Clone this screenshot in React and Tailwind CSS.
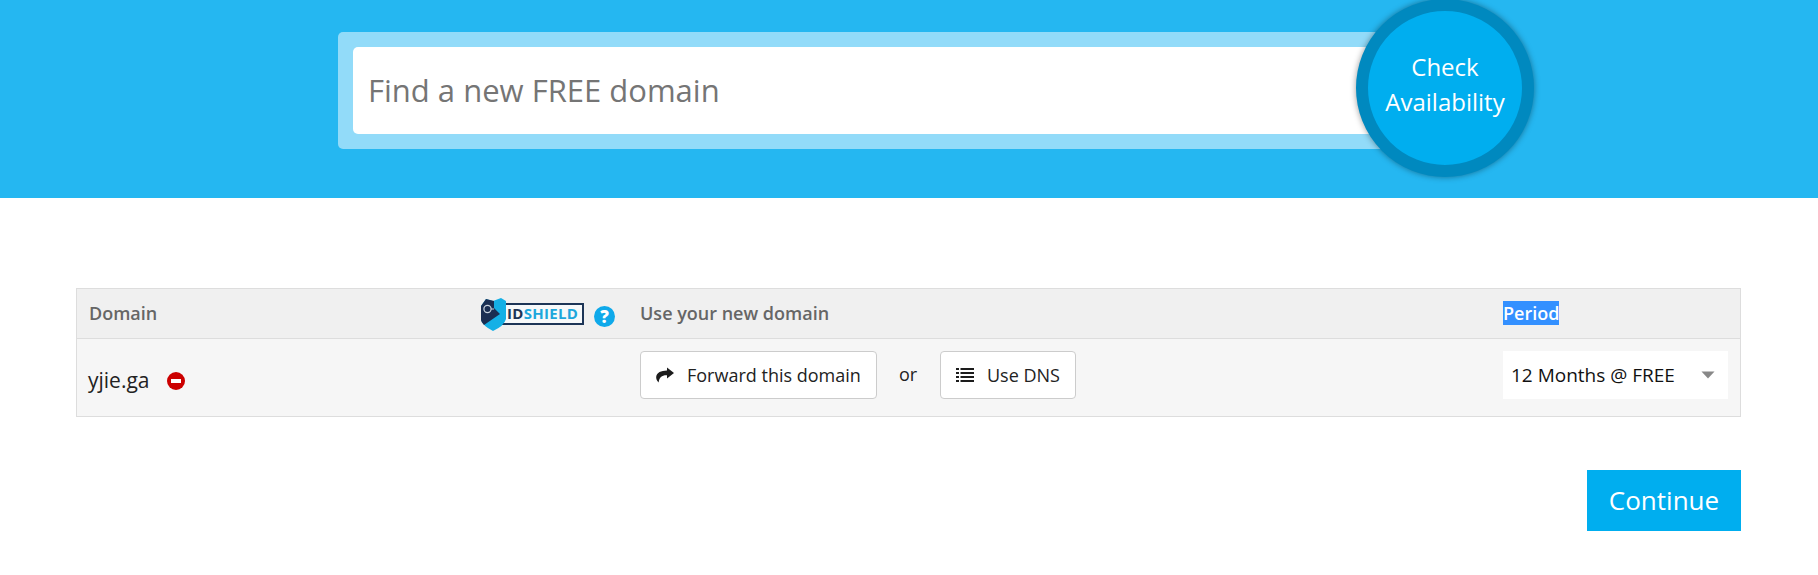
import React from "react";

const font = "font-['Open_Sans','Noto_Sans',sans-serif]";

function ShieldLogo() {
  return (
    <div className="relative w-[104px] h-[33px] mt-[2px] flex items-center shrink-0">
      <div className="ml-[20px] w-[84px] h-[22px] mt-[-2px] border-2 border-[#1d3557] bg-[#f7f9fa] flex items-center pl-[5px] text-[15px] leading-none font-bold font-['Open_Sans',sans-serif] tracking-[0.3px]">
        <span className="text-[#1d3557]">ID</span>
        <span className="text-[#1ea7dc]">SHIELD</span>
      </div>
      <svg className="absolute left-0 top-0" width="27" height="33" viewBox="0 0 27 33">
        <path d="M6 1 L13 3 L21 0 L26 3 L26 21 Q24 28 13 33 Q3 28 1 22 L1 8 Z" fill="#14b0e6" />
        <path d="M6 1 L14 3 L14 10 L20 16 L4 27 Q1 24 1 22 L1 8 Z" fill="#1a2e52" />
        <circle cx="7.5" cy="11" r="3.6" fill="none" stroke="#c9d3de" strokeWidth="1.2" />
        <path d="M11 11 H14" stroke="#c9d3de" strokeWidth="1" />
      </svg>
    </div>
  );
}

function HelpIcon() {
  return (
    <span className="w-[21px] h-[21px] mt-[5px] rounded-full bg-[#0fa9ea] text-white flex items-center justify-center text-[17px] font-extrabold leading-none">
      ?
    </span>
  );
}

function ForwardIcon() {
  return (
    <svg width="18" height="16" viewBox="0 0 18 16" className="shrink-0">
      <path d="M11 0.5 L18 6 L11 11.5 L11 8.2 C6 8 3.2 10 2.6 15.5 C0.6 13.5 0 11.5 0.2 9.8 C0.8 5.6 5 3.8 11 3.6 Z" fill="#1c1c1c" />
    </svg>
  );
}

function ListIcon() {
  return (
    <svg width="18" height="14" viewBox="0 0 18 14" className="shrink-0">
      <path d="M0 0h3v2H0zM0 4h3v2H0zM0 8h3v2H0zM0 12h3v2H0zM4.5 0H18v2H4.5zM4.5 4H18v2H4.5zM4.5 8H18v2H4.5zM4.5 12H18v2H4.5z" fill="#1c1c1c" />
    </svg>
  );
}

export default function App() {
  return (
    <div className={`${font} bg-white h-[575px] overflow-hidden`}>
      <div className="relative h-[198px] bg-[#25b7f1] pl-[338px] pt-[32px]">
        <div className="w-[1100px] h-[117px] bg-[#92dbf9] rounded-[5px] p-[15px]">
          <div className="h-[87px] bg-white rounded-[5px] flex items-center pl-[15px] text-[31px] text-[#757575]">
            Find a new FREE domain
          </div>
        </div>
        <button className="absolute left-[1356px] top-[-1px] w-[178px] h-[178px] rounded-full bg-[#00aeef] border-[12.5px] border-[#0089bf] shadow-[0_0_6px_rgba(0,0,0,0.4)] text-white text-[24px] leading-[35px] text-center pb-[9px]">
          Check
          <br />
          Availability
        </button>
      </div>

      <div className="ml-[76px] w-[1665px] mt-[90px]">
        <div className="border border-[#dddddd] text-[#222]">
          <div className="grid grid-cols-[563px_863px_1fr] h-[50px] bg-[#f0f0f0] border-b border-[#dddddd] items-center text-[18px] font-semibold text-[#666666]">
            <div className="pl-[12px] pr-[14px] flex items-center justify-between">
              <span>Domain</span>
              <div className="flex items-center gap-[10px]">
                <ShieldLogo />
                <HelpIcon />
                <span className="w-[1px]" />
              </div>
            </div>
            <div>Use your new domain</div>
            <div>
              <span className="bg-[#3390ff] text-white">Period</span>
            </div>
          </div>
          <div className="grid grid-cols-[563px_863px_1fr] h-[77px] bg-[#f6f6f6] items-start pt-[12px]">
            <div className="pl-[11px] pt-[16px] flex items-center gap-[17px] text-[21px] text-[#222] leading-[27px]">
              <span>yjie.ga</span>
              <span className="w-[18px] h-[18px] rounded-full bg-[#cc0000] flex items-center justify-center">
                <span className="w-[10px] h-[4px] bg-white" />
              </span>
            </div>
            <div className="flex items-center text-[18px] text-[#222]">
              <button className="w-[237px] h-[48px] bg-white border border-[#cccccc] rounded-[4px] flex items-center pl-[15px] gap-[13px]">
                <ForwardIcon />
                <span>Forward this domain</span>
              </button>
              <span className="w-[18px] ml-[22px] mr-[23px] -mt-[2px]">or</span>
              <button className="w-[136px] h-[48px] bg-white border border-[#cccccc] rounded-[4px] flex items-center pl-[15px] gap-[13px]">
                <ListIcon />
                <span>Use DNS</span>
              </button>
            </div>
            <div className="w-[225px] h-[48px] bg-white flex items-center justify-between pl-[8px] pr-[13px] text-[19px] text-[#111]">
              <span>12 Months @ FREE</span>
              <svg width="14" height="8" viewBox="0 0 14 8">
                <path d="M0.5 0.5 H13.5 L7 7.5 Z" fill="#888888" />
              </svg>
            </div>
          </div>
        </div>
        <div className="flex justify-end mt-[53px]">
          <button className="w-[154px] h-[61px] bg-[#00aeef] text-white text-[26px]">Continue</button>
        </div>
      </div>
    </div>
  );
}
